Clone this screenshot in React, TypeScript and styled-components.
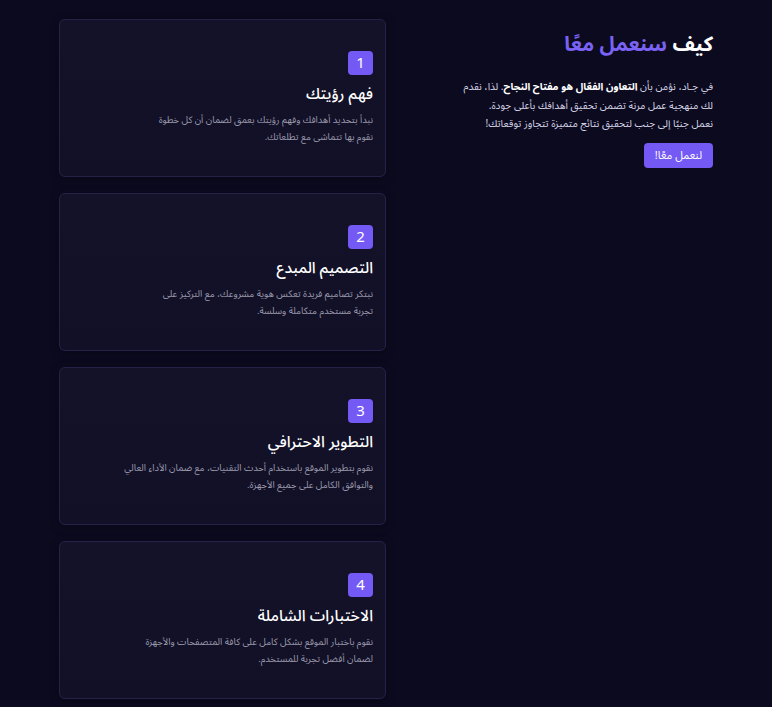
import React from "react";
import styled, { createGlobalStyle } from "styled-components";

const Global = createGlobalStyle`
  html, body {
    margin: 0;
    padding: 0;
    background: #0c0a1f;
  }
  body {
    font-family: "Noto Sans Arabic", "Noto Sans", "DejaVu Sans", sans-serif;
    color: #ffffff;
  }
`;

const Page = styled.main`
  direction: rtl;
  min-height: 707px;
  background: #0c0a1f;
  padding: 19px 0 8px;
  box-sizing: border-box;
`;

const Container = styled.div`
  width: 654px;
  margin: 0 auto;
  display: grid;
  grid-template-columns: 327px 327px;
  align-items: start;
`;

const Intro = styled.section`
  padding: 10px 0 0 20px;
  display: flex;
  flex-direction: column;
  align-items: flex-start;
`;

const Heading = styled.h2`
  margin: 0 0 17px;
  font-size: 20.5px;
  line-height: 32px;
  font-weight: 700;
  color: #ffffff;
`;

const Accent = styled.span`
  color: #7a62f4;
`;

const Lead = styled.p`
  margin: 0 0 9px;
  font-size: 10.2px;
  line-height: 18.5px;
  color: #d6d4e6;
  white-space: nowrap;
`;

const Strong = styled.strong`
  color: #ffffff;
  font-weight: 700;
`;

const CtaButton = styled.button`
  font-family: inherit;
  font-size: 11px;
  line-height: 1;
  color: #ffffff;
  background: #7459f4;
  border: none;
  border-radius: 4px;
  height: 25px;
  padding: 0 11px;
  cursor: pointer;
`;

const Steps = styled.div`
  display: flex;
  flex-direction: column;
  gap: 16px;
`;

const Card = styled.article`
  height: 158px;
  box-sizing: border-box;
  padding: 0 12px;
  border: 1px solid #25224a;
  border-radius: 6px;
  background: linear-gradient(180deg, #131229 0%, #111026 100%);
  box-shadow: 0 2px 10px rgba(0, 0, 0, 0.35);
  display: flex;
  flex-direction: column;
  justify-content: center;
  align-items: flex-start;
`;

const Badge = styled.span`
  width: 25px;
  height: 24px;
  border-radius: 4px;
  background: #7459f4;
  color: #ffffff;
  font-size: 15px;
  display: flex;
  align-items: center;
  justify-content: center;
  margin-bottom: 7px;
`;

const CardTitle = styled.h3`
  margin: 0 0 6px;
  font-size: 15.5px;
  line-height: 24px;
  font-weight: 500;
  color: #ffffff;
`;

const CardText = styled.p`
  margin: 0;
  font-size: 9.4px;
  line-height: 16.5px;
  color: #9c9aad;
  white-space: nowrap;
`;

const steps = [
  {
    n: 1,
    title: "فهم رؤيتك",
    lines: ["نبدأ بتحديد أهدافك وفهم رؤيتك بعمق لضمان أن كل خطوة", "نقوم بها تتماشى مع تطلعاتك."],
  },
  {
    n: 2,
    title: "التصميم المبدع",
    lines: ["نبتكر تصاميم فريدة تعكس هوية مشروعك، مع التركيز على", "تجربة مستخدم متكاملة وسلسة."],
  },
  {
    n: 3,
    title: "التطوير الاحترافي",
    lines: ["نقوم بتطوير الموقع باستخدام أحدث التقنيات، مع ضمان الأداء العالي", "والتوافق الكامل على جميع الأجهزة."],
  },
  {
    n: 4,
    title: "الاختبارات الشاملة",
    lines: ["نقوم باختبار الموقع بشكل كامل على كافة المتصفحات والأجهزة", "لضمان أفضل تجربة للمستخدم."],
  },
];

export default function App() {
  return (
    <>
      <Global />
      <Page>
        <Container>
          <Intro>
            <Heading>
              كيف <Accent>سنعمل معًا</Accent>
            </Heading>
            <Lead>
              في جـاد، نؤمن بأن <Strong>التعاون الفعّال هو مفتاح النجاح</Strong>. لذا، نقدم
              <br />
              لك منهجية عمل مرنة تضمن تحقيق أهدافك بأعلى جودة.
              <br />
              نعمل جنبًا إلى جنب لتحقيق نتائج متميزة تتجاوز توقعاتك!
            </Lead>
            <CtaButton>لنعمل معًا!</CtaButton>
          </Intro>
          <Steps>
            {steps.map((s) => (
              <Card key={s.n}>
                <Badge>{s.n}</Badge>
                <CardTitle>{s.title}</CardTitle>
                <CardText>
                  {s.lines[0]}
                  <br />
                  {s.lines[1]}
                </CardText>
              </Card>
            ))}
          </Steps>
        </Container>
      </Page>
    </>
  );
}
